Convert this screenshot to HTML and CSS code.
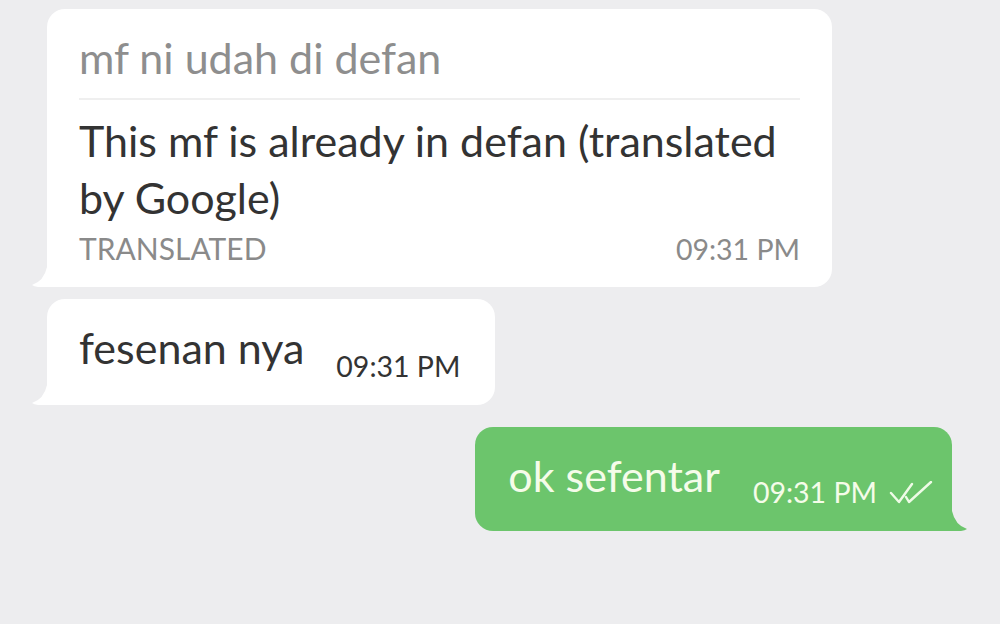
FILE: index.html
```html
<!DOCTYPE html>
<html>
<head>
<meta charset="utf-8">
<link rel="stylesheet" href="styles.css">
</head>
<body>
<div class="chat">
  <div class="bubble in first">
    <div class="orig">mf ni udah di defan</div>
    <div class="divider"></div>
    <div class="trans">This mf is already in defan (translated by Google)</div>
    <div class="meta">
      <span class="label">TRANSLATED</span>
      <span class="time gray">09:31 PM</span>
    </div>
    <svg class="tail tail-left" width="20" height="28" viewBox="0 0 20 28"><path d="M15 0 L15 28 L6 28 Q2 27.5 0 26 Q12 22 15 8 Z" fill="#fff"/></svg>
  </div>
  <div class="bubble in second">
    <span class="msg">fesenan nya</span>
    <span class="time">09:31 PM</span>
    <svg class="tail tail-left" width="20" height="28" viewBox="0 0 20 28"><path d="M15 0 L15 28 L6 28 Q2 27.5 0 26 Q12 22 15 8 Z" fill="#fff"/></svg>
  </div>
  <div class="bubble out">
    <span class="msg">ok sefentar</span>
    <span class="time light">09:31 PM</span>
    <svg class="check" width="44" height="24" viewBox="0 0 44 24"><path d="M2 12 L10 21 L23 3 M17 16 L20 21 L42 1" fill="none" stroke="#eefbe6" stroke-width="2.4" stroke-linecap="round" stroke-linejoin="round"/></svg>
    <svg class="tail tail-right" width="20" height="28" viewBox="0 0 20 28"><path d="M5 0 L5 28 L14 28 Q18 27.5 20 26 Q8 22 5 8 Z" fill="#6cc56c"/></svg>
  </div>
</div>
</body>
</html>
```
FILE: styles.css
```css
html, body {
  margin: 0;
  padding: 0;
}
body {
  background: #ededef;
  font-family: Lato, "Noto Sans", sans-serif;
  width: 1000px;
  height: 624px;
  overflow: hidden;
}
.chat {
  display: flex;
  flex-direction: column;
  padding: 9px 48px 0 47px;
}
.bubble {
  position: relative;
  box-sizing: border-box;
  background: #fff;
}
.in {
  align-self: flex-start;
  border-radius: 18px 18px 18px 0;
}
.first {
  width: 785px;
  height: 278px;
  padding: 23px 32px 0 32px;
}
.orig {
  font-size: 43px;
  color: #8e8e8e;
  line-height: 52px;
}
.divider {
  height: 2px;
  background: #efefef;
  margin-top: 14px;
}
.trans {
  font-size: 43px;
  color: #333;
  line-height: 57px;
  margin-top: 12px;
}
.meta {
  display: flex;
  justify-content: space-between;
  align-items: baseline;
  margin-top: 4px;
}
.label {
  font-size: 30px;
  color: #8a8a8a;
}
.time {
  font-size: 28.5px;
  color: #333;
}
.time.gray {
  color: #8a8a8a;
}
.second {
  margin-top: 12px;
  height: 106px;
  padding: 0 35px 0 32px;
  display: flex;
  align-items: center;
  gap: 32px;
}
.second .msg {
  font-size: 43px;
  color: #333;
  margin-top: -10px;
}
.second .time {
  margin-top: 28px;
}
.out {
  align-self: flex-end;
  margin-top: 22px;
  background: #6cc56c;
  border-radius: 18px 18px 0 18px;
  height: 104px;
  padding: 0 19px 0 33px;
  display: flex;
  align-items: center;
}
.out .msg {
  font-size: 43px;
  color: #f5fce9;
  margin-top: -8px;
}
.out .time {
  color: #f5fce9;
  margin-left: 33px;
  margin-top: 26px;
}
.check {
  margin-left: 12px;
  margin-top: 28px;
}
.tail {
  position: absolute;
  bottom: 0;
}
.tail-left {
  left: -15px;
}
.tail-right {
  right: -15px;
}
```
